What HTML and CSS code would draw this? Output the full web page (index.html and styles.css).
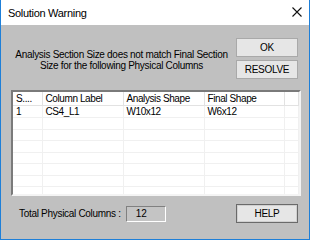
FILE: index.html
```html
<!DOCTYPE html>
<html lang="en">
<head>
    <meta charset="UTF-8">
    <title>Solution Warning</title>
    <link rel="stylesheet" href="styles.css">
</head>
<body>
    <div class="window">
        <div class="titlebar">
            <span class="title">Solution Warning</span>
            <svg class="close" width="10" height="10" viewBox="0 0 10 10">
                <path d="M0.5 0.5 L9.5 9.5 M9.5 0.5 L0.5 9.5" stroke="#111" stroke-width="1.1" fill="none"/>
            </svg>
        </div>

        <div class="content">
            <div class="top">
                <p class="message">Analysis Section Size does not match Final Section<br>Size for the following Physical Columns</p>
                <div class="buttons">
                    <button class="btn">OK</button>
                    <button class="btn">RESOLVE</button>
                </div>
            </div>

            <!-- Column list -->
            <div class="grid">
                <table>
                    <colgroup>
                        <col class="c1"><col class="c2"><col class="c3"><col class="c4"><col>
                    </colgroup>
                    <thead>
                        <tr><th>S....</th><th>Column Label</th><th>Analysis Shape</th><th>Final Shape</th><th></th></tr>
                    </thead>
                    <tbody>
                        <tr class="first"><td>1</td><td>CS4_L1</td><td>W10x12</td><td>W6x12</td><td></td></tr>
                        <tr><td></td><td></td><td></td><td></td><td></td></tr>
                        <tr><td></td><td></td><td></td><td></td><td></td></tr>
                        <tr><td></td><td></td><td></td><td></td><td></td></tr>
                        <tr><td></td><td></td><td></td><td></td><td></td></tr>
                        <tr><td></td><td></td><td></td><td></td><td></td></tr>
                        <tr><td></td><td></td><td></td><td></td><td></td></tr>
                        <tr><td></td><td></td><td></td><td></td><td></td></tr>
                    </tbody>
                </table>
            </div>

            <div class="bottom">
                <span class="label">Total Physical Columns :</span>
                <span class="field">12</span>
                <button class="btn help">HELP</button>
            </div>
        </div>
    </div>
</body>
</html>
```

FILE: styles.css
```css
body {
    margin: 0;
    font-family: "Liberation Sans", Arial, sans-serif;
    font-size: 10px;
    color: #000;
}
.window {
    width: 310px;
    height: 240px;
    box-sizing: border-box;
    border: 1px solid #1e7fd8;
    border-top: none;
    background-color: #c0c0c0;
    display: flex;
    flex-direction: column;
}
.titlebar {
    height: 25px;
    background-color: #fff;
    display: flex;
    align-items: center;
    padding: 0 7px 0 7px;
}
.title {
    font-size: 11px;
    letter-spacing: -0.3px;
    flex: 1;
}
.close {
    margin-right: 0;
    margin-top: -1px;
}
.content {
    padding: 13px 7px 0 10px;
}
.top {
    display: flex;
}
.message {
    flex: 1;
    margin: 0;
    padding-top: 11px;
    text-align: center;
    line-height: 11px;
    letter-spacing: -0.3px;
}
.buttons {
    width: 62px;
    display: flex;
    flex-direction: column;
    gap: 3px;
    margin: 0 4px 0 4px;
}
.btn {
    height: 19px;
    padding: 0;
    font-family: "Liberation Sans", Arial, sans-serif;
    font-size: 10px;
    letter-spacing: -0.3px;
    background-color: #e6e6e6;
    border: 1px solid #a9a9a9;
    color: #000;
}
.grid {
    margin-top: 11px;
    width: 290px;
    height: 106px;
    box-sizing: border-box;
    border: 2px solid;
    border-color: #7a7a7a #f4f4f4 #f4f4f4 #7a7a7a;
    background-color: #fff;
    overflow: hidden;
}
table {
    border-collapse: collapse;
    table-layout: fixed;
    width: 100%;
    letter-spacing: -0.4px;
}
.c1 { width: 29px; }
.c2 { width: 81px; }
.c3 { width: 81px; }
.c4 { width: 80px; }
th {
    height: 13px;
    padding: 0 0 0 3px;
    font-weight: normal;
    text-align: left;
    background-color: #fff;
    border-right: 1px solid #e2e2e2;
    border-bottom: 1px solid #e2e2e2;
    white-space: nowrap;
}
td {
    height: 11px;
    padding: 0 0 0 3px;
    border-right: 1px solid #f0f0f0;
    border-bottom: 1px solid #f0f0f0;
    white-space: nowrap;
}
tbody tr:nth-child(odd) td {
    height: 10px;
}
tr.first td {
    height: 12px;
}
.bottom {
    display: flex;
    align-items: center;
    margin-top: 8px;
}
.label {
    margin-left: 8px;
    letter-spacing: -0.3px;
}
.field {
    width: 40px;
    height: 16px;
    box-sizing: border-box;
    margin-left: 5px;
    padding-left: 9px;
    line-height: 13px;
    border: 1px solid;
    border-color: #808080 #fff #fff #808080;
    background-color: #c4c4c4;
}
.help {
    width: 62px;
    margin-left: auto;
    margin-right: 4px;
    border-color: #6a6a6a;
    box-shadow: inset 0 0 0 1px #d0d0d0;
}
```
